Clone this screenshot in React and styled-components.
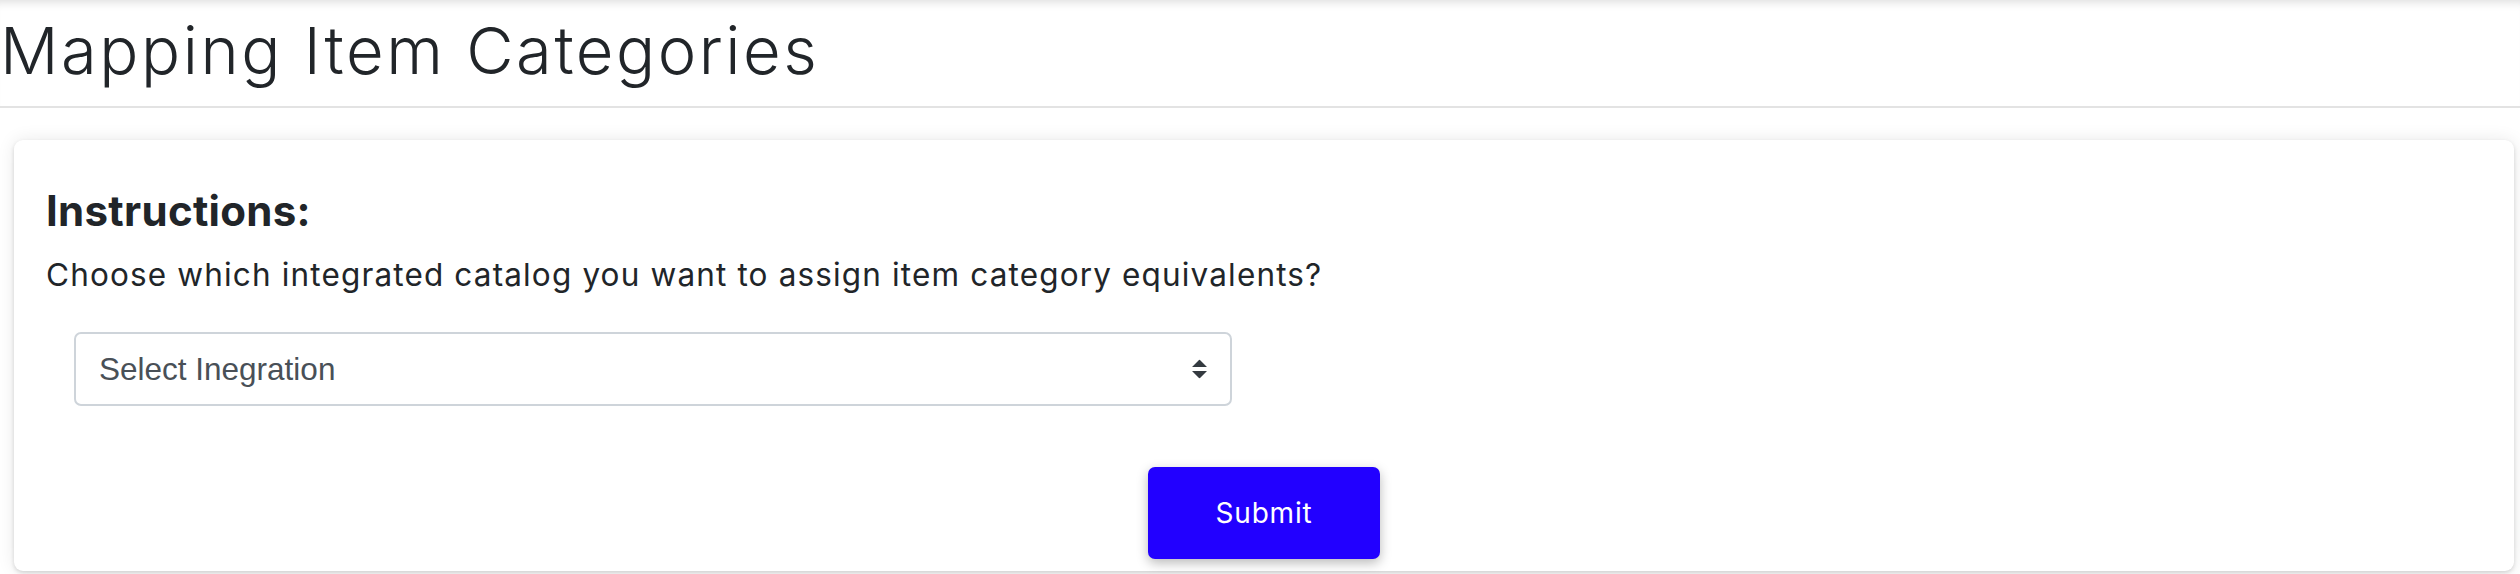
import React from "react";
import styled, { createGlobalStyle } from "styled-components";

const GlobalStyle = createGlobalStyle`
  html, body {
    margin: 0;
    padding: 0;
    background: #ffffff;
    font-family: Inter, "Noto Sans", sans-serif;
    color: #212529;
  }
  * { box-sizing: border-box; }
`;

const Page = styled.div`
  width: 2520px;
  height: 574px;
  overflow: hidden;
  display: flex;
  flex-direction: column;
`;

const Header = styled.header`
  padding: 12px 0 16px 0;
  border-bottom: 2px solid #e3e3e3;
  box-shadow: inset 0 10px 10px -8px rgba(0, 0, 0, 0.14);
`;

const Title = styled.h1`
  margin: 0;
  font-size: 65px;
  font-weight: 300;
  line-height: 78px;
  letter-spacing: 2.55px;
  color: #212529;
`;

const Card = styled.section`
  margin: 32px 6px 0 14px;
  padding: 46px 32px 12px 32px;
  background: #fff;
  border-radius: 9px;
  box-shadow: 0 0 18px rgba(0, 0, 0, 0.09), 0 2px 4px rgba(0, 0, 0, 0.14);
  display: flex;
  flex-direction: column;
`;

const Heading = styled.h4`
  margin: 0;
  font-size: 42px;
  font-weight: 700;
  line-height: 50px;
  letter-spacing: 0.3px;
  color: #212529;
`;

const Lead = styled.p`
  margin: 15px 0 0 0;
  font-size: 31.5px;
  font-weight: 400;
  line-height: 47px;
  letter-spacing: 1.15px;
  color: #212529;
`;

const SelectWrap = styled.div`
  position: relative;
  margin: 34px 0 0 28px;
  width: 1158px;
  height: 74px;
`;

const Select = styled.select`
  appearance: none;
  -webkit-appearance: none;
  width: 100%;
  height: 100%;
  padding: 0 60px 0 23px;
  border: 2px solid #ced4da;
  border-radius: 7px;
  background: #fff;
  font-family: "Liberation Sans", Arial, sans-serif;
  font-size: 31.5px;
  color: #495057;
  outline: none;
`;

const Arrow = styled.svg`
  position: absolute;
  right: 25px;
  top: 50%;
  transform: translateY(-50%);
  width: 15px;
  height: 19px;
  pointer-events: none;
`;

const Actions = styled.div`
  display: flex;
  justify-content: center;
  margin-top: 61px;
`;

const SubmitButton = styled.button`
  width: 232px;
  height: 92px;
  border: none;
  border-radius: 7px;
  background: #2200ff;
  color: #fff;
  font-family: Inter, "Noto Sans", sans-serif;
  font-size: 28px;
  font-weight: 400;
  letter-spacing: 0.8px;
  box-shadow: 0 4px 12px rgba(0, 0, 0, 0.28);
  cursor: pointer;
`;

export default function App() {
  return (
    <Page>
      <GlobalStyle />
      <Header>
        <Title>Mapping Item Categories</Title>
      </Header>
      <Card>
        <Heading>Instructions:</Heading>
        <Lead>Choose which integrated catalog you want to assign item category equivalents?</Lead>
        <SelectWrap>
          <Select defaultValue="">
            <option value="">Select Inegration</option>
          </Select>
          <Arrow viewBox="0 0 4 5" preserveAspectRatio="none">
            <path d="M2 0L0 2h4zm0 5L0 3h4z" fill="#343a40" />
          </Arrow>
        </SelectWrap>
        <Actions>
          <SubmitButton type="button">Submit</SubmitButton>
        </Actions>
      </Card>
    </Page>
  );
}
